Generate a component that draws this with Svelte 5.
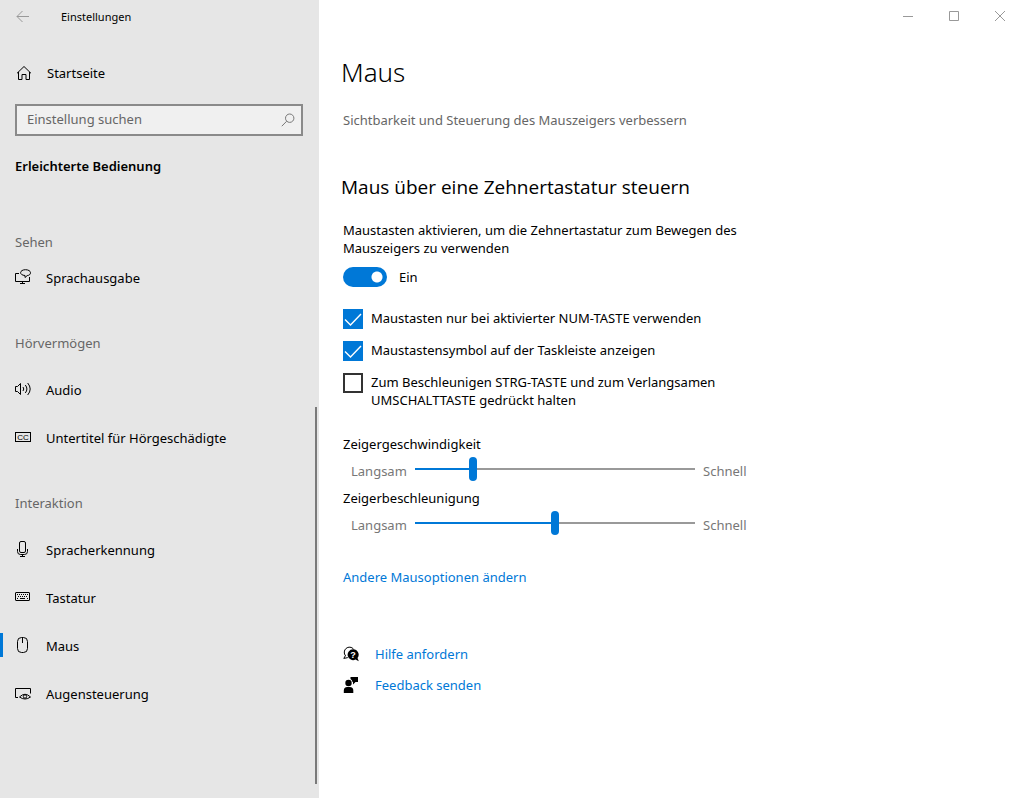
<script>
	let search = '';
	let active = 'Maus';

	const groups = [
		{ title: 'Sehen', items: [{ name: 'Sprachausgabe', icon: 'narrator' }] },
		{
			title: 'Hörvermögen',
			items: [
				{ name: 'Audio', icon: 'audio' },
				{ name: 'Untertitel für Hörgeschädigte', icon: 'captions' }
			]
		},
		{
			title: 'Interaktion',
			items: [
				{ name: 'Spracherkennung', icon: 'microphone' },
				{ name: 'Tastatur', icon: 'keyboard' },
				{ name: 'Maus', icon: 'mouse' },
				{ name: 'Augensteuerung', icon: 'eye' }
			]
		}
	];

	let mouseKeys = true;

	let options = [
		{ id: 'numLock', label: 'Maustasten nur bei aktivierter NUM-TASTE verwenden', checked: true },
		{ id: 'trayIcon', label: 'Maustastensymbol auf der Taskleiste anzeigen', checked: true },
		{
			id: 'modifiers',
			label: 'Zum Beschleunigen STRG-TASTE und zum Verlangsamen UMSCHALTTASTE gedrückt halten',
			checked: false
		}
	];

	let sliders = [
		{ id: 'speed', label: 'Zeigergeschwindigkeit', value: 20 },
		{ id: 'acceleration', label: 'Zeigerbeschleunigung', value: 50 }
	];
</script>

<div class="window">
	<aside class="sidebar">
		<div class="titleBar">
			<button class="back" aria-label="Zurück">
				<svg width="14" height="12" viewBox="0 0 14 12"><path d="M13 5.500H1M6.500 0 1 5.500 6.500 11" /></svg>
			</button>
			<span>Einstellungen</span>
		</div>

		<a class="home" href="#home">
			<svg width="16" height="16" viewBox="0 0 16 16">
				<path d="M2 8.300 9 1.500l7 6.800M3.500 7v7.500h3.500V9.500h4v5h3.500V7" />
			</svg>
			Startseite
		</a>

		<div class="search">
			<input type="text" placeholder="Einstellung suchen" aria-label="Einstellung suchen" bind:value={search} />
			<svg width="14" height="14" viewBox="0 0 14 14">
				<circle cx="8.700" cy="5.200" r="4.200" /><path d="M5.700 8.200.8 13.200" />
			</svg>
		</div>

		<h2>Erleichterte Bedienung</h2>

		<nav>
			{#each groups as group}
				<h3>{group.title}</h3>
				{#each group.items as item (item.name)}
					<a
						class="navItem"
						class:active={active === item.name}
						href="#{item.icon}"
						on:click={() => (active = item.name)}
					>
						<svg width="16" height="16" viewBox="0 0 16 16">
							{#if item.icon === 'narrator'}
								<path d="M4 4.500H.5v8h14V8M5 14.500h5M7.500 12.500v2" />
								<path d="M10 8.500v-2C7 6.300 5.600 5 5.600 3.700 5.600 2 7.700.7 10.500.7s5 1.300 5 3-1.300 2.700-3.300 2.900z" />
							{:else if item.icon === 'audio'}
								<path d="M.5 5.500h2L5.500 2.500v11L2.500 10.500h-2z" />
								<path d="M8 6q1.500 2 0 4M10.300 4q3.200 4 0 8M12.700 2q5 6 0 12" />
							{:else if item.icon === 'captions'}
								<rect x=".5" y="3.500" width="15" height="9" />
								<text x="8" y="11" text-anchor="middle">CC</text>
							{:else if item.icon === 'microphone'}
								<rect x="4.500" y=".5" width="6" height="11" rx="1.500" />
								<path d="M2.500 8v2.500q0 3 3 3h4q3 0 3-3V8M7.500 13.500v2M5 15.500h5" />
							{:else if item.icon === 'keyboard'}
								<rect x=".5" y="3.500" width="14" height="8" rx=".5" />
								<path d="M2 5.500h11M3 7.500h10" stroke-dasharray="1 1" />
								<path d="M2 9.500h1M5 9.500h5M12 9.500h1" />
							{:else if item.icon === 'mouse'}
								<rect x="2.500" y=".5" width="10" height="15" rx="4" /><path d="M7.500 1v5" />
							{:else}
								<path d="M3 12.500H.5v-9h15v5" />
								<path d="M4.500 12q5.500-5.500 11 0-5.500 4-11 0z" /><circle cx="10" cy="11.500" r="1.700" />
							{/if}
						</svg>
						<span>{item.name}</span>
					</a>
				{/each}
			{/each}
		</nav>
		<div class="scrollThumb"></div>
	</aside>

	<div class="content">
		<div class="controls">
			<button aria-label="Minimieren"><svg width="10" height="10" viewBox="0 0 10 10"><path d="M0 5.500h10" /></svg></button>
			<button aria-label="Maximieren"><svg width="10" height="10" viewBox="0 0 10 10"><path d="M.5.5h9v9h-9z" /></svg></button>
			<button aria-label="Schließen"><svg width="10" height="10" viewBox="0 0 10 10"><path d="m0 0 10 10M10 0 0 10" /></svg></button>
		</div>

		<main>
			<h1>Maus</h1>
			<p class="intro">Sichtbarkeit und Steuerung des Mauszeigers verbessern</p>

			<h2>Maus über eine Zehnertastatur steuern</h2>
			<p id="mouseKeysText">
				Maustasten aktivieren, um die Zehnertastatur zum Bewegen des Mauszeigers zu verwenden
			</p>
			<label class="toggle">
				<input type="checkbox" role="switch" aria-describedby="mouseKeysText" bind:checked={mouseKeys} />
				<span>{mouseKeys ? 'Ein' : 'Aus'}</span>
			</label>

			<div class="options">
				{#each options as option (option.id)}
					<label for={option.id}>
						<span class="box">
							<input type="checkbox" id={option.id} bind:checked={option.checked} />
							<svg width="20" height="20" viewBox="0 0 20 20"><path d="m2 10.500 5.500 5.500L18 5" /></svg>
						</span>
						<span>{option.label}</span>
					</label>
				{/each}
			</div>

			{#each sliders as slider (slider.id)}
				<div class="slider">
					<label for={slider.id}>{slider.label}</label>
					<div class="sliderRow">
						<span>Langsam</span>
						<input
							type="range"
							id={slider.id}
							min="0"
							max="100"
							bind:value={slider.value}
							style="--filled: {slider.value}%"
						/>
						<span>Schnell</span>
					</div>
				</div>
			{/each}

			<a class="more" href="#mouse-options">Andere Mausoptionen ändern</a>

			<div class="support">
				<a href="#help">
					<svg width="16" height="16" viewBox="0 0 16 16">
						<path class="line" d="M2.500 9.800A5 5 0 1 1 10.500 3M2.500 9.500.8 12.400l4-.8" />
						<path d="M10 3.300a5.400 5.400 0 1 0 2.500 10.200l3.300 1.800-1.300-3.300A5.400 5.400 0 0 0 10 3.300z" />
						<text x="10" y="12" text-anchor="middle">?</text>
					</svg>
					Hilfe anfordern
				</a>
				<a href="#feedback">
					<svg width="16" height="16" viewBox="0 0 16 16">
						<circle cx="5.500" cy="6" r="3.200" />
						<path d="M.8 16v-2.500q0-3.500 3.500-3.500h2.500q3.500 0 3.500 3.500V16zM7.500 0H15v5h-2.500L10 7.500V5H9.500Q9.300 3 7.500 2z" />
					</svg>
					Feedback senden
				</a>
			</div>
		</main>
	</div>
</div>

<style>
	:global(body) {
		margin: 0;
		font-family: 'Noto Sans', 'Open Sans', sans-serif;
		font-size: 13px;
		line-height: 18px;
		color: #000;
	}

	.window {
		display: flex;
		min-height: 100vh;
		background: #fff;
	}

	h1,
	h2,
	h3,
	p {
		margin: 0;
	}

	a {
		color: #0078d7;
		text-decoration: none;
	}

	button {
		display: flex;
		align-items: center;
		justify-content: center;
		padding: 0;
		border: none;
		background: none;
	}

	svg {
		flex: none;
		fill: none;
		stroke: currentColor;
	}

	.sidebar {
		position: relative;
		flex: none;
		box-sizing: border-box;
		width: 319px;
		background: #e6e6e6;
	}

	.titleBar {
		display: flex;
		align-items: center;
		height: 33px;
		font-size: 11px;
	}

	.back {
		width: 46px;
		height: 32px;
		margin-right: 15px;
		color: #999;
	}

	.home,
	.navItem {
		display: flex;
		align-items: center;
		gap: 15px;
		height: 48px;
		padding-left: 15px;
		color: #000;
	}

	.home {
		gap: 16px;
		margin-top: 16px;
	}

	.search {
		display: flex;
		align-items: center;
		box-sizing: border-box;
		height: 32px;
		margin: 7px 16px 0 15px;
		padding: 0 6px 0 10px;
		border: 2px solid #8a8a8a;
		background: #f0f0f0;
		color: #777;
	}

	.search input {
		flex: 1;
		min-width: 0;
		padding: 0 0 2px;
		border: none;
		outline: none;
		background: none;
		font: inherit;
	}

	.search input::placeholder {
		color: #666;
		opacity: 1;
	}

	.sidebar h2 {
		margin: 21px 0 25px 15px;
		font-size: 13px;
		font-weight: 600;
	}

	h3 {
		padding: 31px 0 11px 15px;
		font-size: 13px;
		font-weight: 400;
		line-height: 22px;
		color: #666;
	}

	h3:first-child {
		padding-bottom: 0;
	}

	.navItem span {
		padding-top: 2px;
	}

	.navItem.active {
		background: linear-gradient(#0078d7, #0078d7) left center / 3px 24px no-repeat;
	}

	.navItem text {
		fill: currentColor;
		stroke: none;
		font: 8px 'Liberation Sans', sans-serif;
	}

	.scrollThumb {
		position: absolute;
		top: 51%;
		right: 2px;
		bottom: 14px;
		width: 2px;
		background: #7a7a7a;
	}

	.content {
		flex: 1;
		min-width: 0;
	}

	.controls {
		display: flex;
		justify-content: flex-end;
		margin-right: -1px;
		overflow: hidden;
		color: #999;
	}

	.controls button {
		width: 46px;
		height: 32px;
		color: inherit;
	}

	main {
		max-width: 416px;
		padding: 22px 24px;
	}

	h1 {
		font-size: 26px;
		font-weight: 300;
		line-height: 36px;
	}

	main h1,
	main h2 {
		margin-left: -2px;
	}

	.intro {
		margin-top: 21px;
		color: #666;
	}

	main h2 {
		margin-top: 46px;
		margin-bottom: 22px;
		font-family: 'Open Sans', sans-serif;
		font-size: 19px;
		font-weight: 400;
		line-height: 24px;
	}

	.toggle {
		display: flex;
		align-items: center;
		gap: 12px;
		margin-top: 10px;
	}

	.toggle input {
		appearance: none;
		width: 44px;
		height: 20px;
		margin: 0;
		border-radius: 10px;
		background: #999 radial-gradient(circle at 10px 10px, #fff 5px, transparent 6px);
	}

	.toggle input:checked {
		background: #0078d7 radial-gradient(circle at 34px 10px, #fff 5px, transparent 6px);
	}

	.options {
		display: flex;
		flex-direction: column;
		gap: 12px;
		margin: 22px 0 26px;
	}

	.options label {
		display: flex;
		gap: 8px;
	}

	.box {
		display: grid;
		flex: none;
		width: 20px;
		height: 20px;
	}

	.box > * {
		grid-area: 1 / 1;
	}

	.box input {
		appearance: none;
		width: 20px;
		height: 20px;
		margin: 0;
		border: 2px solid #333;
	}

	.box input:checked {
		border-color: #0078d7;
		background: #0078d7;
	}

	.box svg {
		visibility: hidden;
		z-index: 1;
		stroke: #fff;
		stroke-width: 1.400;
		pointer-events: none;
	}

	.box input:checked + svg {
		visibility: visible;
	}

	.slider {
		margin-bottom: 4px;
	}

	.slider label {
		display: block;
	}

	.sliderRow {
		display: flex;
		align-items: center;
		gap: 8px;
		height: 32px;
		padding-left: 8px;
		color: #777;
	}

	.sliderRow span {
		min-width: 56px;
		padding-top: 4px;
	}

	.sliderRow input {
		appearance: none;
		flex: 0 1 280px;
		min-width: 0;
		height: 24px;
		margin: 0;
		background: linear-gradient(to right, #0078d7 var(--filled), #999 var(--filled)) center / 100% 2px no-repeat;
	}

	.sliderRow input::-webkit-slider-thumb {
		appearance: none;
		width: 8px;
		height: 24px;
		border-radius: 4px;
		background: #0078d7;
	}

	.more {
		display: inline-block;
		margin-top: 25px;
	}

	.support {
		display: flex;
		flex-direction: column;
		gap: 13px;
		margin-top: 59px;
	}

	.support a {
		display: flex;
		align-items: center;
		gap: 16px;
	}

	.support svg {
		fill: #000;
		stroke: none;
	}

	.support .line {
		fill: none;
		stroke: #000;
	}

	.support text {
		fill: #fff;
		font: bold 9px 'Liberation Sans', sans-serif;
	}
</style>
